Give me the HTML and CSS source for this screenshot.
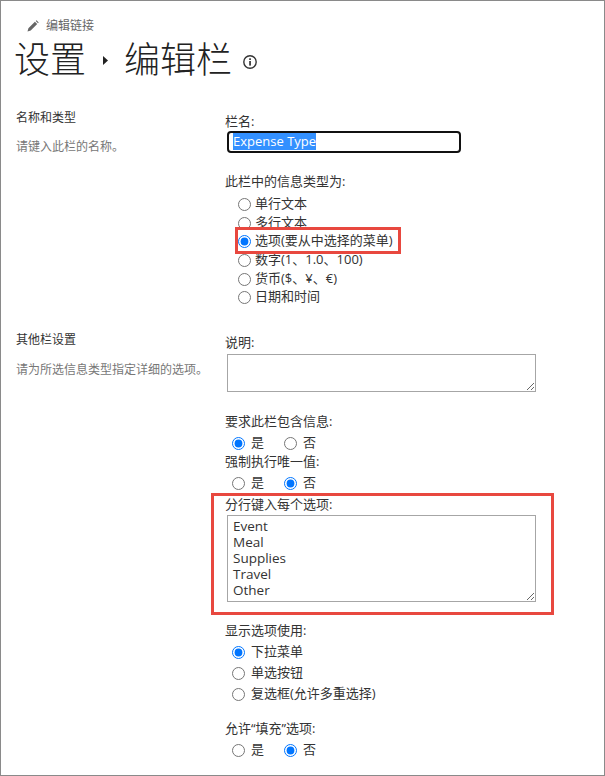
FILE: index.html
```html
<!DOCTYPE html>
<html lang="zh-CN">
<head>
<meta charset="utf-8">
<title>设置 - 编辑栏</title>
<link rel="stylesheet" href="styles.css">
</head>
<body>
<div class="frame">
  <a class="edit-link">
    <svg class="pencil" viewBox="0 0 12 12" width="12" height="12"><path d="M0.5 11.5 L1.4 8.3 L7.9 1.8 L10.2 4.1 L3.7 10.6 Z M8.7 1 L9.6 0.3 L11.7 2.4 L11 3.3 Z" fill="#666"/></svg>
    <span>编辑链接</span>
  </a>
  <h1 class="title">
    <span>设置</span>
    <svg class="crumb" viewBox="0 0 5 9" width="5" height="9"><path d="M0 0 L5 4.5 L0 9 Z" fill="#222"/></svg>
    <span>编辑栏</span>
    <svg class="info" viewBox="0 0 14 14" width="14" height="14"><circle cx="7" cy="7" r="6.2" fill="none" stroke="#333" stroke-width="1.4"/><rect x="6.2" y="6" width="1.7" height="4.6" fill="#333"/><rect x="6.2" y="3.3" width="1.7" height="1.7" fill="#333"/></svg>
  </h1>

  <section class="row row-name">
    <div class="side">
      <h2>名称和类型</h2>
      <p>请键入此栏的名称。</p>
    </div>
    <div class="main">
      <div class="label">栏名:</div>
      <div class="fake-input"><span class="selected">Expense Type</span></div>
      <div class="label gap-type">此栏中的信息类型为:</div>
      <div class="radio-list">
        <label><input type="radio" name="type">单行文本</label>
        <label><input type="radio" name="type">多行文本</label>
        <label><input type="radio" name="type" checked>选项(要从中选择的菜单)</label>
        <label><input type="radio" name="type">数字(1、1.0、100)</label>
        <label><input type="radio" name="type">货币($、¥、€)</label>
        <label><input type="radio" name="type">日期和时间</label>
      </div>
    </div>
  </section>

  <section class="row row-other">
    <div class="side">
      <h2>其他栏设置</h2>
      <p>请为所选信息类型指定详细的选项。</p>
    </div>
    <div class="main">
      <div class="label">说明:</div>
      <textarea class="area area-desc"></textarea>
      <div class="label gap-req">要求此栏包含信息:</div>
      <div class="yes-no">
        <label><input type="radio" name="req" checked>是</label>
        <label><input type="radio" name="req">否</label>
      </div>
      <div class="label gap-uniq">强制执行唯一值:</div>
      <div class="yes-no">
        <label><input type="radio" name="uniq">是</label>
        <label><input type="radio" name="uniq" checked>否</label>
      </div>
      <div class="label gap-choices">分行键入每个选项:</div>
      <textarea class="area area-choices">Event
Meal
Supplies
Travel
Other</textarea>
      <div class="label gap-display">显示选项使用:</div>
      <div class="radio-list wide">
        <label><input type="radio" name="disp" checked>下拉菜单</label>
        <label><input type="radio" name="disp">单选按钮</label>
        <label><input type="radio" name="disp">复选框(允许多重选择)</label>
      </div>
      <div class="label gap-fill">允许“填充”选项:</div>
      <div class="yes-no">
        <label><input type="radio" name="fill">是</label>
        <label><input type="radio" name="fill" checked>否</label>
      </div>
    </div>
  </section>

  <div class="callout callout-choice"></div>
  <div class="callout callout-options"></div>
</div>
</body>
</html>
```
FILE: styles.css
```css
* { box-sizing: border-box; }
html, body { margin: 0; padding: 0; background: #fff; }
body {
  font-family: "Open Sans", "Noto Sans CJK SC", sans-serif;
  font-size: 13px;
  color: #333;
}
.frame {
  position: relative;
  width: 605px;
  height: 776px;
  border: 1px solid #8a8a8a;
  overflow: hidden;
  padding: 0 0 0 15px;
}
.edit-link {
  display: flex;
  align-items: center;
  gap: 7px;
  margin: 17px 0 0 11px;
  height: 16px;
  font-size: 12px;
  line-height: 16px;
  color: #666;
}
.title {
  display: flex;
  align-items: center;
  height: 50px;
  margin: 0 0 0 -2px;
  padding-bottom: 3px;
  font-family: "Noto Sans CJK SC", sans-serif;
  font-size: 36px;
  font-weight: 300;
  color: #222;
  line-height: 47px;
}
.crumb { margin: 6px 16px 0 17px; }
.info { margin: 8px 0 0 11px; }
.row { display: grid; grid-template-columns: 209px 340px; }
.row-name { margin-top: 28px; }
.row-other { margin-top: 27px; }
.side h2 {
  margin: 0;
  font-size: 12px;
  font-weight: 400;
  line-height: 16px;
  color: #333;
}
.side p {
  margin: 14px 0 0;
  font-size: 12px;
  line-height: 16px;
  color: #777;
}
.row-name .side { margin-top: -2px; }
.row-name .side p { margin-top: 13px; }
.row-other .main { padding-top: 1px; }
.label { height: 18px; line-height: 18px; white-space: nowrap; }
.fake-input {
  width: 234px;
  height: 22px;
  margin: 1px 0 0 2px;
  padding: 0 0 0 4px;
  border: 2px solid #111;
  border-radius: 4px;
  line-height: 17px;
  font-size: 13px;
}
.selected { display: inline-block; background: #3390ff; color: #fff; height: 17px; }
.radio-list label,
.yes-no label {
  display: flex;
  align-items: center;
  white-space: nowrap;
}
.radio-list { padding-left: 13px; margin-top: 3px; }
.radio-list label { height: 18.7px; }
.radio-list.wide { padding-left: 7px; margin-top: 1px; }
.radio-list.wide label { height: 21px; }
input[type="radio"] { width: 13px; height: 13px; margin: 4px 4px 0 0; flex: none; }
.wide input { margin-right: 6px; }
.yes-no { display: flex; padding-left: 7px; height: 20px; margin-top: 1px; }
.yes-no label { width: 52px; }
.yes-no input { margin-right: 6px; }
.area {
  display: block;
  width: 309px;
  margin: 3px 0 0 2px;
  padding: 2px 5px;
  border: 1px solid #a6a6a6;
  border-radius: 0;
  font-family: "Open Sans", "Noto Sans CJK SC", sans-serif;
  font-size: 13.5px;
  line-height: 16px;
  color: #333;
  outline: none;
  background: #fff;
}
.area-desc { height: 38px; }
.area-choices { height: 87px; margin-top: 2px; }
.gap-type { margin-top: 19px; }
.gap-req { margin-top: 20px; }
.gap-uniq { margin-top: 1px; }
.gap-choices { margin-top: 4px; }
.gap-display { margin-top: 19px; }
.gap-fill { margin-top: 16px; }
.callout {
  position: absolute;
  border: 3px solid #e8483f;
}
.callout-choice { left: 234px; top: 226px; width: 166px; height: 27px; }
.callout-options { left: 210px; top: 492px; width: 343px; height: 122px; }
```
